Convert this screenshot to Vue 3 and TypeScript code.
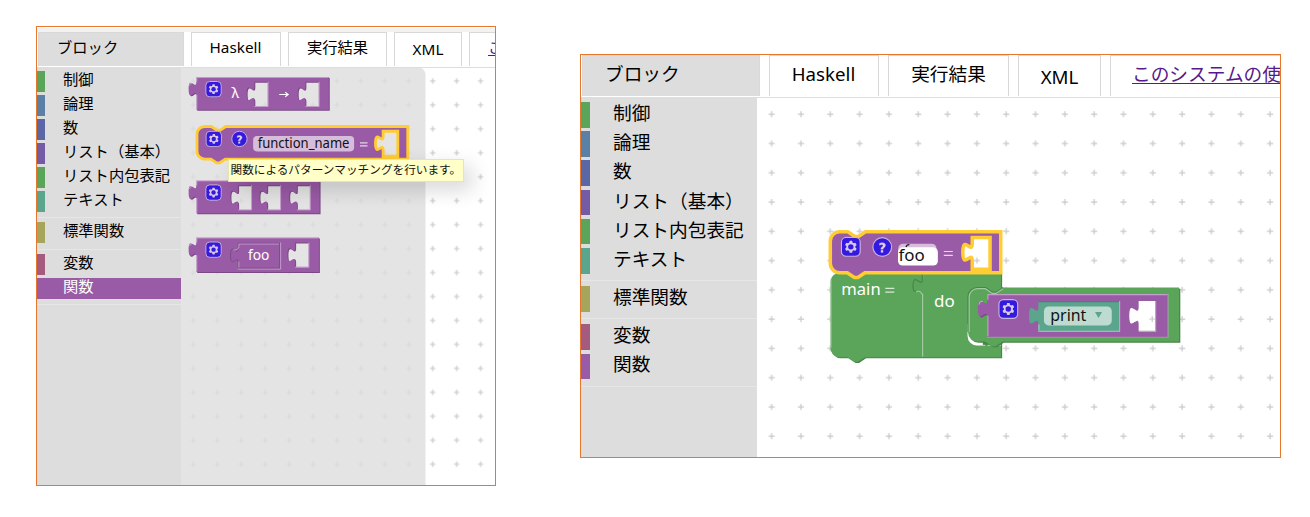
<script setup lang="ts">
interface Category { name: string; tone: string; selected?: boolean; divider?: boolean }
interface Hole { x: number; y: number; w: number; h: number }

const baseCategories: Category[] = [
  { name: '制御', tone: 'green' },
  { name: '論理', tone: 'blue' },
  { name: '数', tone: 'indigo' },
  { name: 'リスト（基本）', tone: 'violet' },
  { name: 'リスト内包表記', tone: 'green' },
  { name: 'テキスト', tone: 'teal', divider: true },
  { name: '標準関数', tone: 'olive', divider: true },
  { name: '変数', tone: 'rose' },
  { name: '関数', tone: 'purple', divider: true },
]

const windows = [
  { id: 'small', categories: baseCategories.map(c => ({ ...c, selected: c.name === '関数' })) },
  { id: 'large', categories: baseCategories },
]

const tabs = [
  { key: 'blocks', label: 'ブロック' },
  { key: 'haskell', label: 'Haskell' },
  { key: 'result', label: '実行結果' },
  { key: 'xml', label: 'XML' },
]

// Rectangle with a jigsaw tab on its left edge.
function piece(x: number, y: number, w: number, h: number): string {
  return `M${x},${y} H${x + w} V${y + h} H${x} V${y + 20} c0,-10 -8,8 -8,-7.5 s8,2.5 8,-7.5 Z`
}
// Statement shape with notch above and bump below.
function statement(w: number, h: number): string {
  return `M0,8 A8,8 0 0,1 8,0 H15 l6,4 3,0 6,-4 H${w} V${h} H29.5 l-6,4 -3,0 -6,-4 H8 a8,8 0 0,1 -8,-8 Z`
}
function holes(list: Hole[]): string {
  return list.map(o => piece(o.x, o.y, o.w, o.h)).join(' ')
}
function shine(w: number, h: number, list: Hole[]): string {
  const edge = `M0.5,${h - 0.5} V18.5 M-7,9 q0.5,-3.5 3,-2.6 M0.5,5 V0.5 H${w - 0.5}`
  return edge + list.map(o => ` M${o.x + o.w + 0.5},${o.y} v${o.h + 0.5} h${-o.w - 0.5} M${o.x - 5},${o.y + 17.5} l4,-1`).join('')
}
function makeBlock(x: number, y: number, w: number, h: number, list: Hole[]) {
  return { at: `translate(${x} ${y}) scale(0.958)`, d: `${piece(0, 0, w, h)} ${holes(list)}`, light: shine(w, h, list) }
}

const lambda = makeBlock(196.3, 77, 138.3, 34.3, [
  { x: 60.6, y: 5, w: 13.8, h: 25.3 }, { x: 113.9, y: 5, w: 13.8, h: 25.3 },
])
const apply = makeBlock(196.3, 180.4, 128.7, 34.3, [
  { x: 43.7, y: 5, w: 13.5, h: 25.3 }, { x: 74, y: 5, w: 13.5, h: 25.3 }, { x: 105, y: 5, w: 13.5, h: 25.3 },
])
const call = makeBlock(196.3, 237.5, 128, 36, [{ x: 103.2, y: 5.3, w: 13.8, h: 25.3 }])
const namedHole: Hole[] = [{ x: 194.3, y: 5, w: 15.3, h: 26 }]
const fooHole: Hole[] = [{ x: 121, y: 5, w: 15.2, h: 27 }]
const printHole: Hole[] = [{ x: 129, y: 6, w: 14, h: 25.3 }]
const fnPath = `${statement(220, 34)} ${holes(namedHole)}`
const fooPath = `${statement(145.3, 35)} ${holes(fooHole)}`
const printPath = `${piece(0, 0, 153.3, 36.4)} ${holes(printHole)}`
</script>

<template>
  <main class="page">
    <svg class="defs" width="0" height="0" aria-hidden="true">
      <symbol id="gear" viewBox="-1 -1 18 18">
        <g opacity="0.9">
          <rect width="16" height="16" rx="4" fill="#2a12e6" stroke="#cdbbe6" stroke-width="1" />
          <path fill="#dfd5f2" d="m4.203,7.296 0,1.368 -0.92,0.677 -0.11,0.41 0.9,1.559 0.41,0.11 1.043,-0.457 1.187,0.683 0.127,1.134 0.3,0.3 1.8,0 0.3,-0.299 0.127,-1.138 1.185,-0.682 1.046,0.458 0.409,-0.11 0.9,-1.559 -0.11,-0.41 -0.92,-0.677 0,-1.366 0.92,-0.677 0.11,-0.41 -0.9,-1.559 -0.409,-0.109 -1.046,0.458 -1.185,-0.682 -0.127,-1.138 -0.3,-0.299 -1.8,0 -0.3,0.3 -0.126,1.135 -1.187,0.682 -1.043,-0.457 -0.41,0.11 -0.899,1.559 0.108,0.409z" />
          <circle cx="8" cy="8" r="2.3" fill="#2a12e6" />
        </g>
      </symbol>
      <symbol id="help" viewBox="-1 -1 18 18">
        <g opacity="0.9">
          <circle cx="8" cy="8" r="8" fill="#2a12e6" stroke="#cdbbe6" stroke-width="1" />
          <path fill="#e6def5" stroke="#e6def5" stroke-width="0.3" d="m6.8,10h2c0.003,-0.617 0.271,-0.962 0.633,-1.266 2.875,-2.405 0.607,-5.534 -3.765,-3.874v1.7c3.12,-1.657 3.698,0.118 2.336,1.25 -1.201,0.998 -1.201,1.528 -1.204,2.19z" />
          <rect x="6.8" y="10.78" width="2" height="2" fill="#e6def5" />
        </g>
      </symbol>
    </svg>

    <section v-for="win in windows" :key="win.id" class="window" :class="win.id">
      <header class="tabs">
        <div v-for="tab in tabs" :key="tab.key" class="tab" :class="tab.key">{{ tab.label }}</div>
        <div class="tab guide"><a>このシステムの使い方</a></div>
      </header>
      <div class="body">
        <nav class="toolbox">
          <template v-for="cat in win.categories" :key="cat.name">
            <div class="category" :class="[cat.tone, { selected: cat.selected }]"><span>{{ cat.name }}</span></div>
            <div v-if="cat.divider" class="divider"></div>
          </template>
        </nav>

        <svg v-if="win.id === 'small'" class="workspace" width="314" height="418" viewBox="181 67 314 418">
          <defs>
            <pattern id="gridSmall" x="181.22" y="69.02" width="23.95" height="23.95" patternUnits="userSpaceOnUse">
              <path d="M9.3,11.98 h5.4 M11.98,9.3 v5.4" class="cross" />
            </pattern>
          </defs>
          <rect x="181" y="67" width="314" height="418" fill="url(#gridSmall)" />
          <path d="M181,67.5 H495" class="top-line" />
          <path d="M181,67 H417.5 a8,8 0 0 1 8,8 V485 H181 Z" fill="#ddd" fill-opacity="0.8" />

          <g v-for="(b, i) in [lambda, apply, call]" :key="i" :transform="b.at">
            <path :d="b.d" transform="translate(1 1)" fill="#7a4984" fill-rule="evenodd" />
            <path :d="b.d" fill="#995ba5" fill-rule="evenodd" />
            <path :d="b.light" class="light" />
            <use href="#gear" x="9" y="3.7" width="18" height="18" />
          </g>
          <g class="label">
            <text x="231.5" y="98.3" font-size="14.5">λ</text>
            <path d="M279.3,94.5 H287.6 M285.2,92.2 l3,2.3 -3,2.3" class="arrow" />
          </g>
          <g transform="translate(196.5 237.7) scale(0.958)">
            <path d="M43.5,5.8 H86.8 V31.8 H43.5 V26 c0,-10 -8,8 -8,-7.5 s8,2.5 8,-7.5 Z" fill="#995ba5" stroke="#7a4984" />
            <path d="M44.2,31.2 V25 M38.4,12.8 q2.5,1 5.8,-2 V6.6 H86 M87.8,5 V32.8 H43" class="light" />
          </g>
          <text x="248" y="260" class="label" font-size="13.8">foo</text>

          <g transform="translate(197 126.5) scale(0.958)">
            <path :d="fnPath" fill="#995ba5" fill-rule="evenodd" class="chosen" />
            <use href="#gear" x="8.5" y="4" width="18" height="18" />
            <use href="#help" x="35.3" y="4" width="18" height="18" />
            <rect x="58.6" y="10" width="105.4" height="16" rx="4" fill="#fff" fill-opacity="0.6" />
          </g>
          <text x="257.7" y="148.3" class="ink" font-size="13.6" textLength="91.8" lengthAdjust="spacingAndGlyphs">function_name</text>
          <path d="M360,142.8 h7.5 M360,145.8 h7.5" class="equals" />
        </svg>

        <svg v-else class="workspace" width="523" height="360" viewBox="757 97 523 360">
          <defs>
            <pattern id="gridLarge" x="756.95" y="99.5" width="29.32" height="29.27" patternUnits="userSpaceOnUse">
              <path d="M11.6,14.65 h6.2 M14.7,11.6 v6.2" class="cross" />
            </pattern>
          </defs>
          <rect x="757" y="97" width="523" height="360" fill="url(#gridLarge)" />
          <path d="M757,97.5 H1280" class="top-line" />

          <g transform="translate(830.3 272.7) scale(1.173)">
            <path :d="statement(145.5, 72)" transform="translate(1 1)" fill="#498449" />
            <path :d="statement(145.5, 72)" fill="#5ba55b" />
            <path d="M0.5,1 V64 M29.5,0.5 H146" class="light" />
            <path d="M78.7,71.5 V18 M78.7,5 V1" class="light" />
            <path d="M78.5,0 V5 c0,10 -8,-8 -8,7.5 q0,4 3,3.4" class="seam" />
            <path d="M73,16.5 q4,-2 5,2" class="light" />
            <path d="M117,44 V54 a8,8 0 0 0 8,8 H132 V44 Z" fill="#fff" />
            <path d="M130,58 H145.5 V61.5 H130 Z" fill="#498449" />
            <path d="M134,62 H145.5" class="light" />
          </g>
          <g class="label">
            <text x="841.3" y="294.7" font-size="16.6">main</text>
            <path d="M885.3,288.3 h9 M885.3,292.1 h9" class="equals" />
            <text x="934.1" y="306.8" font-size="17">do</text>
          </g>
          <g transform="translate(968 287.5) scale(1.173)">
            <path :d="statement(180, 46)" transform="translate(1 1)" fill="#498449" />
            <path :d="statement(180, 46)" fill="#5ba55b" />
            <path d="M0,38 V8 A8,8 0 0 1 8,0 H15 l6,4 3,0 6,-4" class="seam" />
            <path d="M1,38 V8 A7,7 0 0 1 8,1 H14.8 l6,4 3,0 6,-4" class="light" />
          </g>
          <g transform="translate(987.3 294) scale(1.173)">
            <path :d="printPath" transform="translate(1 1)" fill="#7a4984" fill-rule="evenodd" />
            <path :d="printPath" fill="#995ba5" fill-rule="evenodd" />
            <path :d="piece(129, 6, 14, 25.3)" fill="#fff" />
            <path :d="shine(153.5, 36.4, printHole)" class="light" />
            <path d="M154,0 V36.9 H0" class="light" />
            <use href="#gear" x="8.9" y="3.8" width="18" height="18" />
            <path :d="piece(43.5, 6, 69, 25.5)" fill="#5ba58c" />
            <path d="M43.5,6.5 H112.5" stroke="#498470" stroke-width="1" />
            <path d="M44,31 V26 M112.8,6 V31.8 H43.5" class="light" />
            <rect x="48.3" y="10.6" width="57.8" height="16.2" rx="4" fill="#fff" fill-opacity="0.6" />
          </g>
          <path d="M1149.2,319 h6 M1152.2,316 v6" class="cross" />
          <text x="1050.3" y="320.9" class="ink" font-size="17" textLength="36" lengthAdjust="spacingAndGlyphs">print</text>
          <path d="M1095,312 h7 l-3.5,6 z" fill="#5ba58c" />

          <g transform="translate(830.3 231.7) scale(1.173)">
            <path :d="fooPath" fill="#995ba5" fill-rule="evenodd" class="chosen" />
            <use href="#gear" x="8.5" y="3.9" width="18" height="18" />
            <use href="#help" x="35.3" y="4" width="18" height="18" />
            <rect x="58" y="10.2" width="32.5" height="16" rx="4" fill="#fff" fill-opacity="0.6" />
            <rect x="57.7" y="13.3" width="34" height="15.6" rx="4" fill="#fff" />
          </g>
          <path d="M906,247 q0.6,-2.6 3.4,-2.4" class="tick" />
          <text x="898.5" y="260.8" class="ink" font-size="17" textLength="26.3" lengthAdjust="spacingAndGlyphs">foo</text>
          <path d="M943.8,251.5 h9 M943.8,255.3 h9" class="equals" />
        </svg>
      </div>
      <div v-if="win.id === 'small'" class="tooltip">関数によるパターンマッチングを行います。</div>
    </section>
  </main>
</template>

<style>
body { margin: 0; background: #fff; }
</style>

<style scoped>
.page {
  box-sizing: border-box;
  display: flex;
  align-items: flex-start;
  gap: 84px;
  width: 1310px;
  height: 517px;
  padding: 26px 0 0 36px;
  overflow: hidden;
  font-family: "Noto Sans", "Noto Sans CJK JP", sans-serif;
  color: #000;
}
.defs { position: absolute; }
.window {
  position: relative;
  box-sizing: border-box;
  flex: none;
  display: flex;
  flex-direction: column;
  border: 1px solid #e8772e;
  background: #fff;
  overflow: hidden;
}
.small { width: 460px; height: 460px; font-size: 15.3px; }
.large { width: 701px; height: 404px; margin-top: 28px; font-size: 18.7px; }

.tabs { display: flex; flex: none; box-sizing: border-box; white-space: nowrap; }
.small .tabs { height: 40px; gap: 7px; padding: 5px 0 1px 1px; background: linear-gradient(#fff 1px, #f2f2f2 1px, #f2f2f2 5px, #fff 5px); }
.large .tabs { height: 42px; gap: 9px; padding: 0 0 1px 1px; }
.tab {
  box-sizing: border-box;
  flex: none;
  display: flex;
  justify-content: center;
  border: 1px solid #d8d8d8;
  border-bottom: 0;
}
.small .tab { line-height: 28px; }
.large .tab { line-height: 35px; }
.tab.blocks { background: #ddd; justify-content: flex-start; }
.small .blocks { width: 146px; padding-left: 18px; }
.small .haskell { width: 90px; padding-right: 1px; }
.small .result { width: 99px; }
.small .xml { width: 68px; line-height: 33px; }
.small .guide { width: 220px; justify-content: flex-start; padding-left: 18px; }
.large .blocks { width: 178px; padding-left: 22px; }
.large .haskell { width: 110px; padding-right: 1px; }
.large .result { width: 121px; }
.large .xml { width: 83px; line-height: 41px; }
.large .guide { width: 260px; justify-content: flex-start; padding-left: 21px; }
.guide a { color: #551a8b; text-decoration: underline; text-decoration-thickness: 1px; text-underline-offset: 2px; }

.body { display: flex; flex: 1; min-height: 0; }
.toolbox { flex: none; display: flex; flex-direction: column; box-sizing: border-box; background: #ddd; white-space: nowrap; }
.small .toolbox { width: 144px; padding-top: 4px; }
.large .toolbox { width: 176px; padding-top: 5px; }
.category { flex: none; box-sizing: border-box; display: flex; align-items: center; border-left: 8px solid; }
.category span { color: #000; line-height: 1; }
.small .category { height: 21px; margin-bottom: 2.95px; padding: 0 0 3px 18px; }
.large .category { height: 25.7px; margin-bottom: 3.5px; border-left-width: 9px; padding: 0 0 3px 23px; }
.divider { flex: none; border-top: 1px solid #e6e6e6; }
.small .divider { margin: 2.5px 0 4px; }
.large .divider { margin: 3px 0 5px; }
.green { border-color: #5ba55b; }
.blue { border-color: #5b80a5; }
.indigo { border-color: #5b67a5; }
.violet { border-color: #745ba5; }
.teal { border-color: #5ba58c; }
.olive { border-color: #a5a55b; }
.rose { border-color: #a55b80; }
.purple { border-color: #995ba5; }
.selected { background: #995ba5; }
.category.selected span { color: #fff; }

.workspace { display: block; flex: none; }
.cross { stroke: #c8c8c8; stroke-width: 1.2; fill: none; }
.top-line { stroke: #ddd; stroke-width: 1; }
.light { fill: none; stroke: #fff; stroke-opacity: 0.42; stroke-width: 1; }
.seam { fill: none; stroke: #498449; stroke-width: 1; }
.chosen { stroke: #fc3; stroke-width: 3; }
.label { fill: #fff; }
.ink { fill: #111; }
.arrow { fill: none; stroke: #fff; stroke-width: 1.1; }
.equals { fill: none; stroke: #fff; stroke-opacity: 0.75; stroke-width: 1.2; }
.tick { fill: none; stroke: #222; stroke-width: 1.3; }

.tooltip {
  position: absolute;
  left: 191px;
  top: 132px;
  box-sizing: border-box;
  width: 236px;
  height: 23px;
  padding-left: 1.5px;
  border: 1px solid #e6e6b4;
  background: #ffffc7;
  box-shadow: 8px 8px 20px rgba(0, 0, 0, 0.16);
  font-size: 11.65px;
  line-height: 20px;
  white-space: nowrap;
  color: #111;
}
</style>
